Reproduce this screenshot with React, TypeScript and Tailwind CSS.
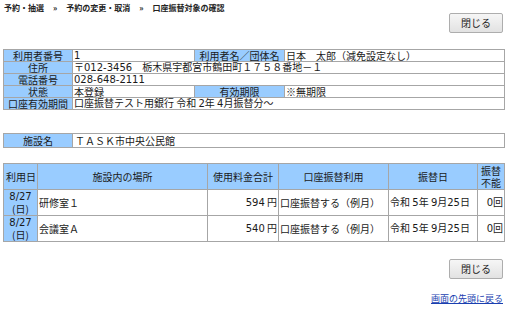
const font = { fontFamily: '"DejaVu Sans", "Noto Sans CJK JP", sans-serif' };

function CloseButton() {
  return (
    <button className="w-[54px] h-[20px] border border-[#adadad] rounded-[2px] bg-gradient-to-b from-[#f6f6f6] to-[#e2e2e2] text-[10px] text-[#222] leading-none">
      閉じる
    </button>
  );
}

const lbl = "bg-[#99ccff] border border-[#a6a6a6] text-center px-[2px] py-0 whitespace-nowrap";
const val = "bg-white border border-[#a6a6a6] text-left px-[1px] py-0 whitespace-nowrap";

export default function App() {
  return (
    <div
      className="w-[512px] h-[312px] overflow-hidden bg-white text-[#1a1a1a] text-[10px] leading-[10px] pl-[3px] pr-[8px] pt-[3px]"
      style={{ fontFamily: '"Noto Sans CJK JP", "DejaVu Sans", sans-serif' }}
    >
      {/* breadcrumb */}
      <div className="flex items-center gap-[9px] text-[8px] font-bold leading-[9px] text-[#222] pl-[1px]">
        <span>予約・抽選</span>
        <span>»</span>
        <span>予約の変更・取消</span>
        <span>»</span>
        <span>口座振替対象の確認</span>
      </div>

      <div className="flex justify-end mt-[1px] pr-[1px]">
        <CloseButton />
      </div>

      {/* 利用者情報 */}
      <table className="mt-[16px] w-[501px] border-collapse table-fixed">
        <colgroup>
          <col className="w-[69px]" />
          <col className="w-[122px]" />
          <col className="w-[90px]" />
          <col className="w-[220px]" />
        </colgroup>
        <tbody>
          <tr className="h-[12px]">
            <td className={lbl}>利用者番号</td>
            <td className={val} style={font}>1</td>
            <td className={lbl}>利用者名／団体名</td>
            <td className={val}>日本　太郎（減免設定なし）</td>
          </tr>
          <tr className="h-[12px]">
            <td className={lbl}>住所</td>
            <td className={val} colSpan={3}>
              〒<span style={font}>012-3456</span>　栃木県宇都宮市鶴田町１７５８番地－１
            </td>
          </tr>
          <tr className="h-[12px]">
            <td className={lbl}>電話番号</td>
            <td className={val} colSpan={3} style={font}>028-648-2111</td>
          </tr>
          <tr className="h-[12px]">
            <td className={lbl}>状態</td>
            <td className={val}>本登録</td>
            <td className={lbl}>有効期限</td>
            <td className={val}>※無期限</td>
          </tr>
          <tr className="h-[12px]">
            <td className={lbl}>口座有効期間</td>
            <td className={val} colSpan={3}>
              口座振替テスト用銀行 令和 <span style={font}>2</span>年 <span style={font}>4</span>月振替分～
            </td>
          </tr>
        </tbody>
      </table>

      {/* 施設名 */}
      <table className="mt-[23px] w-[501px] border-collapse table-fixed">
        <colgroup>
          <col className="w-[69px]" />
          <col className="w-[432px]" />
        </colgroup>
        <tbody>
          <tr className="h-[14px]">
            <td className={lbl}>施設名</td>
            <td className={val + " px-[2px]"}>ＴＡＳＫ市中央公民館</td>
          </tr>
        </tbody>
      </table>

      {/* 予約一覧 */}
      <table className="mt-[15px] w-[501px] border-collapse table-fixed">
        <colgroup>
          <col className="w-[34px]" />
          <col className="w-[170px]" />
          <col className="w-[71px]" />
          <col className="w-[110px]" />
          <col className="w-[89px]" />
          <col className="w-[27px]" />
        </colgroup>
        <thead>
          <tr className="h-[26px]">
            <th className={lbl + " font-normal"}>利用日</th>
            <th className={lbl + " font-normal"}>施設内の場所</th>
            <th className={lbl + " font-normal"}>使用料金合計</th>
            <th className={lbl + " font-normal"}>口座振替利用</th>
            <th className={lbl + " font-normal"}>振替日</th>
            <th className={lbl + " font-normal leading-[12px] px-0"}>
              振替
              <br />
              不能
            </th>
          </tr>
        </thead>
        <tbody>
          {[
            { place: "研修室１", fee: "594" },
            { place: "会議室Ａ", fee: "540" },
          ].map((r) => (
            <tr key={r.place} className="h-[26px]">
              <td className={lbl + " leading-[12px] px-0"}>
                <span style={font}>8/27</span>
                <br />
                (日)
              </td>
              <td className={val}>{r.place}</td>
              <td className={val + " text-right"}>
                <span style={font}>{r.fee}</span> 円
              </td>
              <td className={val}>口座振替する（例月）</td>
              <td className={val}>
                令和 <span style={font}>5</span>年 <span style={font}>9</span>月<span style={font}>25</span>日
              </td>
              <td className={val + " text-right"}>
                <span style={font}>0</span>回
              </td>
            </tr>
          ))}
        </tbody>
      </table>

      <div className="flex justify-end mt-[17px] pr-[1px]">
        <CloseButton />
      </div>

      <div className="flex justify-end mt-[15px] pr-[1px]">
        <a href="#" className="text-[9px] leading-[10px] text-[#1a3fb0] underline">
          画面の先頭に戻る
        </a>
      </div>
    </div>
  );
}
